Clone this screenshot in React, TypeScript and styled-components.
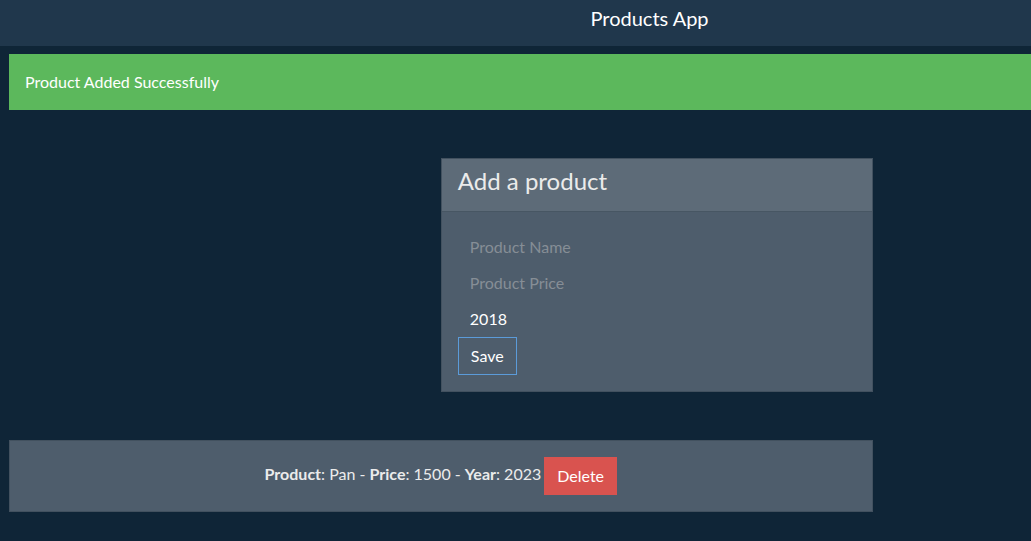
import React, { useState } from "react";
import styled, { createGlobalStyle } from "styled-components";

const GlobalStyle = createGlobalStyle`
  *, *::before, *::after { box-sizing: border-box; }
  body {
    margin: 0;
    background: #0f2537;
    color: #ebebeb;
    font-family: Lato, "Liberation Sans", sans-serif;
    font-size: 16px;
    line-height: 24px;
    text-rendering: optimizeLegibility;
  }
`;

const Navbar = styled.nav`
  display: flex;
  justify-content: center;
  padding: 3px 0 13px 26%;
  background: #20374c;
`;

const Brand = styled.a`
  color: #fff;
  font-size: 20px;
  line-height: 30px;
  text-decoration: none;
`;

const Main = styled.main`
  padding: 8px 0 24px 9px;
`;

const Alert = styled.div`
  padding: 16px;
  background: #5cb85c;
  color: #fff;
`;

const Board = styled.div`
  display: grid;
  grid-template-columns: 30fr 30fr 11fr;
  row-gap: 48px;
  margin-top: 48px;
`;

const Card = styled.section<{ $wide?: boolean }>`
  grid-column: ${({ $wide }) => ($wide ? "1 / 3" : "2 / 3")};
  border: 1px solid #42515f;
  background: #4e5d6c;
`;

const CardHeader = styled.header`
  padding: 9px 16px 17px;
  border-bottom: 1px solid #475663;
  background: #5d6b78;
`;

const Title = styled.h1`
  margin: 0;
  font-size: 24px;
  font-weight: 400;
  line-height: 26px;
`;

const Form = styled.form`
  display: flex;
  flex-direction: column;
  align-items: flex-start;
  padding: 16px;
`;

const Fields = styled.div`
  width: 100%;
  padding-bottom: 1px;
`;

const Field = styled.input`
  display: block;
  width: 100%;
  height: 36px;
  padding: 6px 12px;
  border: 0;
  outline: 0;
  background: transparent;
  color: #fff;
  font: inherit;
  &::placeholder { color: #868e96; opacity: 1; }
`;

const Button = styled.button<{ $danger?: boolean }>`
  height: 38px;
  padding: 6px 12px;
  border: 1px solid ${({ $danger }) => ($danger ? "#d9534f" : "#5b9bd9")};
  background: ${({ $danger }) => ($danger ? "#d9534f" : "transparent")};
  color: #fff;
  font: inherit;
  cursor: pointer;
`;

const ProductRow = styled.div`
  display: flex;
  justify-content: center;
  gap: 3px;
  padding: 16px;
`;

const Details = styled.p`
  margin: 0;
  line-height: 34px;
`;

export default function App() {
  const [name, setName] = useState("");
  const [price, setPrice] = useState("");
  const [year, setYear] = useState("2018");

  return (
    <>
      <GlobalStyle />
      <Navbar>
        <Brand href="#">Products App</Brand>
      </Navbar>
      <Main>
        <Alert role="status">Product Added Successfully</Alert>
        <Board>
          <Card>
            <CardHeader>
              <Title>Add a product</Title>
            </CardHeader>
            <Form onSubmit={(e) => e.preventDefault()}>
              <Fields>
                <Field aria-label="Product Name" placeholder="Product Name" value={name} onChange={(e) => setName(e.target.value)} />
                <Field aria-label="Product Price" placeholder="Product Price" value={price} onChange={(e) => setPrice(e.target.value)} />
                <Field aria-label="Product Year" value={year} onChange={(e) => setYear(e.target.value)} />
              </Fields>
              <Button type="submit">Save</Button>
            </Form>
          </Card>
          <Card $wide>
            <ProductRow>
              <Details>
                <strong>Product</strong>: Pan - <strong>Price</strong>: 1500 - <strong>Year</strong>: 2023
              </Details>
              <Button type="button" $danger>Delete</Button>
            </ProductRow>
          </Card>
        </Board>
      </Main>
    </>
  );
}
